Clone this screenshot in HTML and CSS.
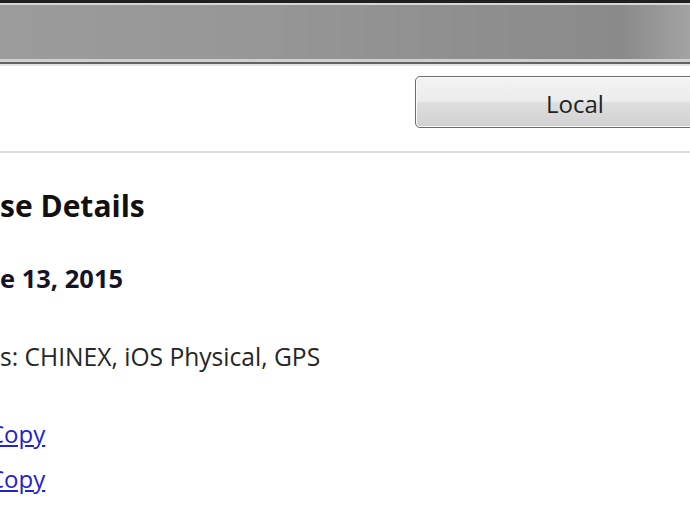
FILE: index.html
```html
<!DOCTYPE html>
<html lang="en">
<head>
  <meta charset="UTF-8" />
  <title>Release Details</title>
  <link rel="stylesheet" href="styles.css">
</head>
<body>
  <div class="titlebar"></div>
  <div class="titlebar-edge"></div>

  <div class="toolbar">
    <button class="btn" type="button">Local</button>
  </div>
  <hr class="rule" />

  <div class="details">
    <h1 class="title">se Details</h1>
    <h2 class="date">e 13, 2015</h2>
    <p class="tags">s: CHINEX, iOS Physical, GPS</p>
    <p class="link-row"><a href="#" class="copy">Copy</a></p>
    <p class="link-row second"><a href="#" class="copy">Copy</a></p>
  </div>
</body>
</html>
```

FILE: styles.css
```css
/* === Base === */
* {
  margin: 0;
  padding: 0;
  box-sizing: border-box;
}

html, body {
  width: 690px;
  height: 518px;
  overflow: hidden;
  background: #fff;
}

body {
  font-family: "Open Sans", "Noto Sans", sans-serif;
  color: #1e1e1e;
}

/* window chrome */
.titlebar {
  height: 59px;
  border-top: 3px solid #1f1f1f;
  box-shadow: inset 0 2px 0 #d6d6d6;
  background: linear-gradient(90deg, #9b9b9b 0%, #979797 35%, #8d8d8d 75%, #8a8a8a 90%, #a3a3a3 100%);
}

.titlebar-edge {
  height: 7px;
  border-top: 3px solid #cfcfcf;
  border-bottom: 2px solid #e2e2e2;
  background: #626262;
}

/* toolbar */
.toolbar {
  display: flex;
  padding: 10px 0 0 415px;
  height: 85px;
  overflow: hidden;
}

.btn {
  flex-shrink: 0;
  width: 320px;
  height: 52px;
  border: 1px solid #6c6c6c;
  border-radius: 5px;
  background: linear-gradient(#f3f3f3 0%, #ececec 48%, #dedede 52%, #d1d1d1 100%);
  box-shadow: inset 0 0 0 1px #fbfbfb;
  font-family: "Open Sans", sans-serif;
  font-size: 24px;
  color: #222;
  padding-top: 2px;
}

.rule {
  border: none;
  height: 2px;
  background: #dcdcdc;
}

/* details */
.details {
  padding-top: 35px;
}

.title {
  font-size: 30px;
  line-height: 36px;
  font-weight: 700;
  color: #111;
}

.date {
  margin-top: 39px;
  font-size: 25.5px;
  line-height: 30px;
  font-weight: 700;
  color: #141428;
}

.tags {
  margin-top: 49px;
  font-size: 24.6px;
  line-height: 30px;
  color: #262626;
}

.link-row {
  margin-top: 47px;
  font-size: 24px;
  line-height: 30px;
  margin-left: -11px;
}

.link-row.second {
  margin-top: 15px;
}

.copy {
  color: #2323c8;
  text-decoration: underline;
}
```
